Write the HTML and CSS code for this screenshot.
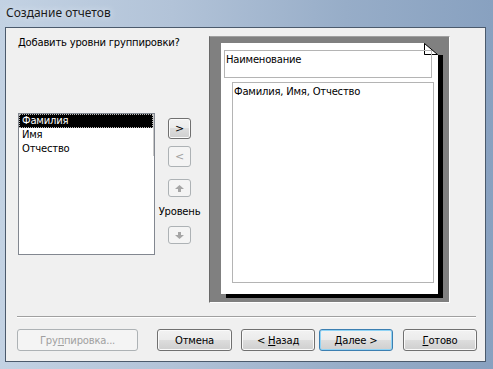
FILE: index.html
```html
<!DOCTYPE html>
<html lang="ru">
<head>
  <meta charset="UTF-8">
  <title>Создание отчетов</title>
  <link rel="stylesheet" href="styles.css">
</head>
<body>

  <div class="window">
    <div class="titlebar">Создание отчетов</div>

    <div class="client">
      <div class="main">

        <!-- Список полей -->
        <div class="left">
          <div class="prompt">Добавить уровни группировки?</div>
          <div class="listbox">
            <div class="items">
              <div class="item selected">Фамилия</div>
              <div class="item">Имя</div>
              <div class="item">Отчество</div>
            </div>
          </div>
        </div>

        <!-- Кнопки перемещения -->
        <div class="mover">
          <button class="btn sq">&gt;</button>
          <button class="btn sq second" disabled>&lt;</button>
          <button class="btn sm third" disabled>
            <svg width="9" height="7" viewBox="0 0 9 7"><polygon points="0,4 4.5,0 9,4 6,4 6,7 3,7 3,4" fill="#a6a6a6"/></svg>
          </button>
          <div class="level">Уровень</div>
          <button class="btn sm" disabled>
            <svg width="9" height="7" viewBox="0 0 9 7"><polygon points="3,0 6,0 6,3 9,3 4.5,7 0,3 3,3" fill="#a6a6a6"/></svg>
          </button>
        </div>

        <!-- Образец отчета -->
        <div class="preview">
          <div class="page">
            <div class="fold">
              <svg width="19" height="12" viewBox="0 0 19 12">
                <rect x="0" y="0" width="19" height="12" fill="#808080"/>
                <polygon points="0.5,0.5 13.5,11.5 0.5,11.5" fill="#fff" stroke="#000" stroke-width="1"/>
              </svg>
            </div>
            <div class="group-head">Наименование</div>
            <div class="group-body">Фамилия, Имя, Отчество</div>
          </div>
        </div>

      </div>

      <div class="sep"></div>

      <div class="buttons">
        <button class="btn wide" disabled>Гру<u>п</u>пировка...</button>
        <button class="btn cancel">Отмена</button>
        <button class="btn back">&lt; <u>Н</u>азад</button>
        <button class="btn next default"><u>Д</u>алее &gt;</button>
        <button class="btn done"><u>Г</u>отово</button>
      </div>
    </div>
  </div>

</body>
</html>
```

FILE: styles.css
```css
body {
  margin: 0;
  width: 493px;
  height: 369px;
  overflow: hidden;
  background: linear-gradient(90deg, #c3d2e3 0%, #b2c3d8 35%, #97adc8 70%, #88a1c0 100%);
  font-family: "DejaVu Sans", Verdana, sans-serif;
  font-size: 10px;
  letter-spacing: -0.2px;
}

.titlebar {
  height: 27px;
  line-height: 26px;
  padding-left: 6px;
  font-family: "Noto Sans", sans-serif;
  font-size: 12px;
  letter-spacing: 0;
  color: #1b1b1b;
  text-shadow: 0 0 6px #e8eef6;
}

.client {
  box-sizing: border-box;
  margin-left: 5px;
  width: 481px;
  height: 335px;
  border: 1px solid #4b5a6c;
  background-color: #f0f0f0;
}

.main {
  display: flex;
  height: 275px;
  box-sizing: border-box;
  padding: 8px 0 0 12px;
}

.left {
  width: 137px;
}

.prompt {
  line-height: 13px;
  white-space: nowrap;
  color: #000;
}

.listbox {
  box-sizing: border-box;
  margin-top: 64px;
  width: 137px;
  height: 142px;
  border: 1px solid #828790;
  background-color: #fff;
}

.items {
  width: 134px;
  border-right: 1px solid #c8c8c8;
}

.item {
  box-sizing: border-box;
  height: 14px;
  line-height: 13px;
  padding-left: 3px;
  color: #000;
}

.item.selected {
  background-color: #000;
  color: #fff;
  border: 1px dotted #bbb;
  line-height: 11px;
  padding-left: 2px;
}

.btn {
  box-sizing: border-box;
  padding: 0;
  border: 1px solid #707070;
  border-radius: 3px;
  background: linear-gradient(#f2f2f2 0%, #ebebeb 50%, #dddddd 50%, #cfcfcf 100%);
  box-shadow: inset 0 0 0 1px #fafafa;
  font-family: "DejaVu Sans", Verdana, sans-serif;
  font-size: 10px;
  letter-spacing: -0.2px;
  color: #000;
  text-align: center;
  white-space: nowrap;
}

.btn svg {
  display: block;
  margin: 0 auto;
}

.btn:disabled {
  border-color: #adb2b5;
  background: #f4f4f4;
  box-shadow: none;
  color: #a0a0a0;
}

.btn.default {
  border-color: #3c7fb1;
  box-shadow: inset 0 0 0 1px #8fd3f5;
}

.mover {
  width: 23px;
  margin-left: 13px;
  display: flex;
  flex-direction: column;
  align-items: center;
}

.btn.sq {
  width: 23px;
  height: 21px;
  margin-top: 82px;
  font-size: 11px;
}

.btn.sq.second {
  margin-top: 7px;
}

.btn.sm {
  width: 23px;
  height: 18px;
}

.btn.third {
  margin-top: 12px;
}

.level {
  height: 29px;
  line-height: 29px;
  white-space: nowrap;
  color: #000;
}

.preview {
  box-sizing: border-box;
  margin-left: 18px;
  width: 241px;
  height: 267px;
  padding: 6px 0 0 11px;
  background-color: #808080;
  border: 1px solid;
  border-color: #a0a0a0 #fff #fff #696969;
}

.page {
  position: relative;
  width: 217px;
  height: 251px;
  background-color: #fff;
  box-shadow: 5px 4px 0 #000;
}

.fold {
  position: absolute;
  top: 0;
  right: -5px;
  width: 19px;
  height: 12px;
}

.fold svg {
  display: block;
}

.group-head {
  box-sizing: border-box;
  margin-left: 3px;
  position: relative;
  top: 7px;
  width: 208px;
  height: 28px;
  border: 1px solid #b4b4b4;
  padding: 2px 0 0 1px;
  line-height: 13px;
  color: #000;
}

.group-body {
  box-sizing: border-box;
  margin-left: 11px;
  position: relative;
  top: 11px;
  width: 202px;
  height: 201px;
  border: 1px solid #b4b4b4;
  padding: 2px 0 0 1px;
  line-height: 13px;
  color: #000;
}

.sep {
  margin: 13px 0 0 11px;
  width: 459px;
  border-top: 1px solid #a0a0a0;
  border-bottom: 1px solid #fff;
}

.buttons {
  display: flex;
  margin-top: 11px;
  padding-left: 11px;
}

.buttons .btn {
  height: 22px;
  width: 74px;
}

.btn.wide {
  width: 121px;
}

.buttons .btn.cancel {
  width: 75px;
  margin-left: 19px;
}

.btn.back {
  margin-left: 9px;
}

.btn.next {
  margin-left: 4px;
}

.btn.done {
  margin-left: 10px;
}
```
